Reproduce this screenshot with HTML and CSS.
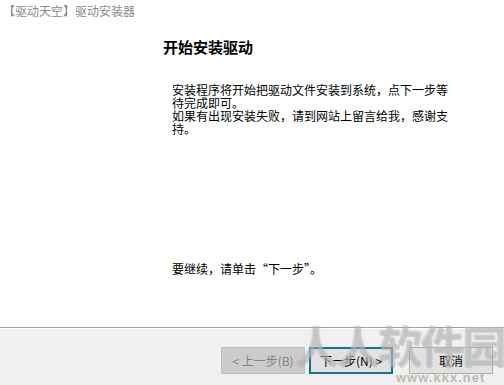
FILE: index.html
```html
<!DOCTYPE html>
<html lang="zh-CN">
<head>
<meta charset="utf-8">
<title>驱动安装器</title>
<link rel="stylesheet" href="styles.css">
</head>
<body>
<div class="window">
  <div class="main">
    <div class="caption">【驱动天空】驱动安装器</div>
    <div class="content">
      <h1 class="heading">开始安装驱动</h1>
      <p class="desc">安装程序将开始把驱动文件安装到系统，点下一步等待完成即可。<br>如果有出现安装失败，请到网站上留言给我，感谢支持。</p>
      <p class="hint">要继续，请单击“下一步”。</p>
    </div>
  </div>
  <div class="footer">
    <button class="btn btn-disabled" disabled>&lt; 上一步(B)</button>
    <button class="btn btn-default">下一步(N) &gt;</button>
    <button class="btn btn-cancel">取消</button>
  </div>
  <div class="watermark">人人软件园</div>
  <div class="watermark-url">www.kkx.net</div>
</div>
</body>
</html>
```

FILE: styles.css
```css
html, body {
  margin: 0;
  padding: 0;
  background: #ffffff;
}
body {
  font-family: "Noto Sans CJK SC", "Liberation Sans", sans-serif;
  font-size: 12px;
  color: #000;
}
.window {
  position: relative;
  width: 504px;
  height: 385px;
  overflow: hidden;
  display: flex;
  flex-direction: column;
}
.main {
  height: 327px;
  background: #ffffff;
  display: flex;
  flex-direction: column;
}
.caption {
  padding: 4px 0 0 3px;
  font-size: 12px;
  line-height: 14px;
  color: #8a8a8a;
}
.content {
  padding-left: 163px;
  display: flex;
  flex-direction: column;
}
.heading {
  margin: 20px 0 0 0;
  font-size: 15px;
  line-height: 18px;
  font-weight: bold;
  color: #000;
}
.desc {
  margin: 27px 0 0 9px;
  width: 282px;
  line-height: 13px;
  font-size: 12px;
}
.hint {
  margin: 127px 0 0 9px;
  line-height: 14px;
  font-size: 12px;
}
.footer {
  flex: 1;
  border-top: 1px solid #a0a0a0;
  box-shadow: inset 0 1px 0 #ffffff;
  background: #f0f0f0;
  display: flex;
  justify-content: flex-end;
  align-items: flex-start;
  padding: 19px 11px 0 0;
  gap: 4px;
}
.btn {
  width: 84px;
  height: 27px;
  font-family: inherit;
  font-size: 12px;
  padding: 0;
  margin: 0;
  box-sizing: border-box;
  border: 1px solid #adadad;
  background: #e1e1e1;
  color: #000;
}
.btn-disabled {
  background: #cccccc;
  border-color: #bfbfbf;
  color: #838383;
}
.btn-default {
  border: 2px solid #1d6e95;
}
.btn-cancel {
  margin-left: 12px;
}
.watermark {
  position: absolute;
  left: 294px;
  top: 318px;
  font-size: 44px;
  line-height: 52px;
  font-weight: bold;
  color: rgba(255, 255, 255, 0.3);
  text-shadow: 0 0 1px rgba(120, 120, 120, 0.4), 1px 1px 1px rgba(150, 150, 150, 0.3);
  letter-spacing: -2px;
  pointer-events: none;
}
.watermark-url {
  position: absolute;
  left: 396px;
  top: 371px;
  font-family: "Liberation Sans", sans-serif;
  font-size: 13px;
  line-height: 14px;
  font-weight: bold;
  color: rgba(175, 165, 150, 0.75);
  letter-spacing: 1px;
  pointer-events: none;
}
```
